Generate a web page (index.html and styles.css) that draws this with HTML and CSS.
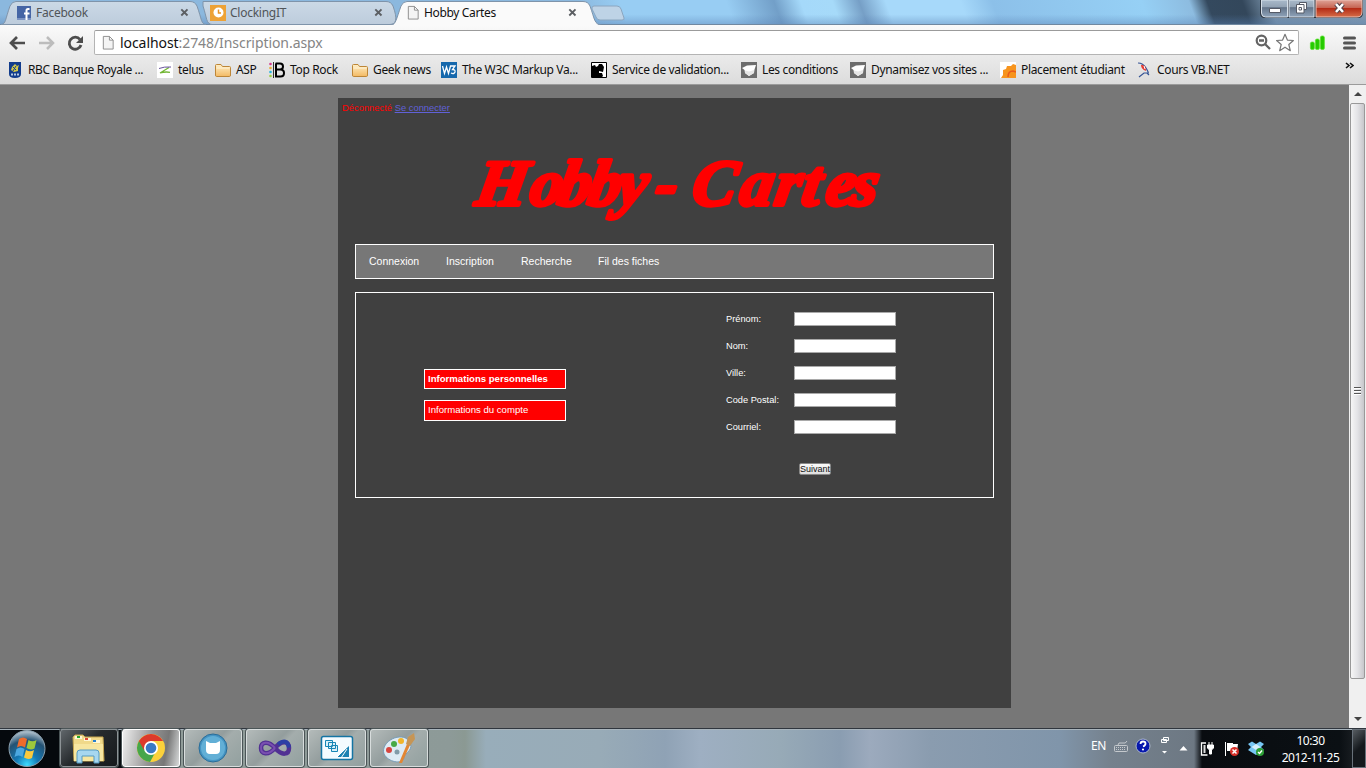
FILE: index.html
```html
<!DOCTYPE html>
<html lang="fr">
<head>
<meta charset="utf-8">
<title>Hobby Cartes</title>
<link rel="stylesheet" href="styles.css">
</head>
<body>
<svg class="defs" width="0" height="0">
  <defs>
    <linearGradient id="tabg" x1="0" y1="0" x2="0" y2="1"><stop offset="0" stop-color="#cbd9e6"/><stop offset="1" stop-color="#bdccdc"/></linearGradient>
    <linearGradient id="fold" x1="0" y1="0" x2="0" y2="1"><stop offset="0" stop-color="#fff0c8"/><stop offset="1" stop-color="#f3b963"/></linearGradient>
    <symbol id="page" viewBox="0 0 12 16"><path d="M1 1.500h6.500l4 4v9.500H1zM7.500 1.500v4h4" fill="#f4f4f4" stroke="#8c8c8c"/></symbol>
    <symbol id="x" viewBox="0 0 9 9"><path d="M1.300 1.300l6.200 6.200M7.500 1.300L1.300 7.500" stroke="#5c5f63" stroke-width="1.900"/></symbol>
    <symbol id="folder" viewBox="0 0 16 14"><path d="M.5 12V2.500Q.5 1.500 1.500 1.500H6l1.500 2h7q1 0 1 1V12q0 1.500-1 1.500h-13q-1 0-1-1.500z" fill="url(#fold)" stroke="#bd8637"/><path d="M1.500 5h13" stroke="#fff3d6"/></symbol>
    <symbol id="grad" viewBox="0 0 16 16"><path d="M0 0h16v16H0z" fill="#6d6d6d"/><path d="M1 6l5-2.500 9-.5-1.500 4.500L13 11l-5 3-4-3-.5-3z" fill="#fff"/><path d="M4 8.500l4 1 5-1.500v3l-5 3-4-3z" fill="#e6e6e6"/></symbol>
  </defs>
</svg>
<div class="window">
  <header class="tabs">
    <div class="tab tab-one">
      <svg class="shape" viewBox="0 0 207 25"><path d="M1 24.500C6 24 5 20 10 6Q12 1.500 16 1.500H190Q195 1.500 197 6C202 20 201 24 206 24.500z" fill="url(#tabg)" stroke="#7f94aa"/></svg>
      <svg class="fav" viewBox="0 0 14 14"><path d="M0 0h14v14H0z" fill="#4565a5"/><path d="M0 12h14v2H0z" fill="#7b93c2"/><path d="M12.500 3h-1.500q-1.500 0-1.500 1.500V14M7 7.500h5.500" fill="none" stroke="#fff" stroke-width="2"/></svg>
      <span class="name">Facebook</span>
      <svg class="close"><use href="#x"/></svg>
    </div>
    <div class="tab tab-two">
      <svg class="shape" viewBox="0 0 200 25"><path d="M1 1.500H184Q189 1.500 191 6C196 20 194 24 188 24.500H10C4 24 5 18 1 6z" fill="url(#tabg)" stroke="#7f94aa"/></svg>
      <svg class="fav" viewBox="0 0 16 16"><rect width="16" height="16" fill="#eda236"/><circle cx="8.500" cy="7.500" r="5" fill="#fff"/><path d="M8.500 4.500V8h2.500" fill="none" stroke="#e89425" stroke-width="1.500"/></svg>
      <span class="name">ClockingIT</span>
      <svg class="close"><use href="#x"/></svg>
    </div>
    <div class="tab tab-three">
      <svg class="shape" viewBox="0 0 212 26"><path d="M0 25.500C5 24 5 20 10 6Q12 1.500 16 1.500H192Q197 1.500 199 6C204 20 203 24 211 25.500" fill="#fafafa" stroke="#7f94aa"/><path d="M0 25h212v1H0z" fill="#fafafa"/></svg>
      <svg class="doc"><use href="#page"/></svg>
      <span class="name">Hobby Cartes</span>
      <svg class="close"><use href="#x"/></svg>
    </div>
    <svg class="newtab" viewBox="0 0 34 18"><path d="M3 1h23q3 0 4 3l3 9q.6 2-2 2H9q-3 0-4-3L1 4q-.6-3 2-3z" fill="#bed3e6" stroke="#8ba6c0"/></svg>
    <div class="controls">
      <svg viewBox="0 0 104 19" width="104" height="19">
        <defs><linearGradient id="wb" x1="0" y1="0" x2="0" y2="1"><stop offset="0" stop-color="#a9bacb"/><stop offset=".4" stop-color="#94a4b5"/><stop offset=".45" stop-color="#64758a"/><stop offset="1" stop-color="#8fa3b9"/></linearGradient>
        <linearGradient id="rb" x1="0" y1="0" x2="0" y2="1"><stop offset="0" stop-color="#dfa396"/><stop offset=".45" stop-color="#c66553"/><stop offset=".5" stop-color="#b52c16"/><stop offset="1" stop-color="#d56d48"/></linearGradient></defs>
        <path d="M0 0v13q0 5 5 5h93q5 0 5-5V0z" fill="#2c3540"/>
        <path d="M1.500 0v13q0 4 4 4h22V0z" fill="url(#wb)" stroke="#d6dfe8"/><path d="M29 0h25v17H29z" fill="url(#wb)" stroke="#d6dfe8"/><path d="M56 0v17h41q5 0 5-5V0z" fill="url(#rb)" stroke="#eec3b9"/>
        <path d="M9.500 8.500h11v4h-11z" fill="#fff" stroke="#555a66"/>
        <path d="M39.500 2.500h7v7h-7z" fill="#fff" stroke="#555a66"/><path d="M36.500 4.500h7.500v8.500h-7.500z" fill="#fff" stroke="#555a66"/><path d="M39 7.500h2.500v2.500h-2.500z" fill="#fff" stroke="#555a66"/>
        <path d="M76 4l7 8M83 4l-7 8" stroke="#564248" stroke-width="4.500"/><path d="M76 4l7 8M83 4l-7 8" stroke="#fff" stroke-width="2.500"/>
      </svg>
    </div>
  </header>
  <div class="toolbar">
    <div class="addressrow">
      <svg class="nav" width="84" height="24" viewBox="0 0 84 24" fill="none"><path d="M18 12H5M10 6l-6 6 6 6" transform="translate(7 0)" stroke="#4d4d4d" stroke-width="2.700"/><path d="M39 12h13M47 6l6 6-6 6" stroke="#bcbcbc" stroke-width="2.500"/><path d="M80 8.500A6 6 0 1 0 81 14" stroke="#4d4d4d" stroke-width="2.800"/><path d="M83 5v7h-7z" fill="#4d4d4d"/></svg>
      <div class="omnibox">
        <svg class="doc"><use href="#page"/></svg>
        <div class="url"><b>localhost</b>:2748/Inscription.aspx</div>
        <svg width="44" height="22" viewBox="0 0 44 22"><circle cx="8.500" cy="8.500" r="4.800" fill="#fff" stroke="#646464" stroke-width="2.200"/><path d="M6 8.500h5M12 12l5 5" stroke="#646464" stroke-width="2.300"/><path d="M32 2.300l2.400 5.800 6 .4-4.600 4 1.500 6.200-5.300-3.500-5.300 3.500 1.500-6.200-4.600-4 6-.4z" fill="#fff" stroke="#777" stroke-width="1.200" stroke-linejoin="round"/></svg>
      </div>
      <svg class="tools" width="52" height="22" viewBox="0 0 52 22"><g fill="#25ca00" stroke="#5be32d" stroke-width=".7"><rect x="3.400" y="10" width="4" height="7.500" rx="1.500"/><rect x="8.400" y="7" width="4" height="10.500" rx="1.500"/><rect x="13.400" y="4" width="4" height="13.500" rx="1.500"/></g><path d="M37.500 6h10M37.500 11h10M37.500 16h10" stroke="#555" stroke-width="3" stroke-linecap="round"/></svg>
    </div>
    <nav class="bookmarks">
      <a class="w1"><svg viewBox="0 0 16 16"><path d="M2 0h12v12q0 4-6 4t-6-4z" fill="#123c8c"/><path d="M4 8l1-3 3-3 2 2 2-1-1 3v3l-4 1z" fill="#d3c84a"/><path d="M6 5l3 3M9 4l-3 5" stroke="#123c8c"/><path d="M4 12.500h8" stroke="#b8cbe3" stroke-width="2" stroke-dasharray="2 1"/></svg><span>RBC Banque Royale ...</span></a>
      <a class="w2"><svg viewBox="0 0 16 16"><path d="M0 0h16v16H0z" fill="#fff"/><path d="M12 5.500L3 11q5-1.500 10-.7" fill="none" stroke="#72b633" stroke-width="1.300"/><path d="M2 6.500q5-2 12-1.500" fill="none" stroke="#66519a"/></svg><span>telus</span></a>
      <a class="w3"><svg viewBox="0 0 16 14"><use href="#folder"/></svg><span>ASP</span></a>
      <a class="w4"><svg viewBox="0 0 16 16"><path d="M6.500 1.500H11q3 0 3 3T11 7.500H7h4.500q3.500 0 3.500 3.500t-3.500 3.500H7v-13" fill="none" stroke="#000" stroke-width="2"/><path d="M4.500 0v16" stroke="#000" stroke-width=".8"/><circle cx="1.500" cy="2" r="1.300" fill="#d5398e"/><circle cx="1.500" cy="6" r="1.300" fill="#e9ac38"/><circle cx="1.500" cy="10" r="1.300" fill="#26b5dd"/><circle cx="1.500" cy="14" r="1.300" fill="#9bcf40"/></svg><span>Top Rock</span></a>
      <a class="w5"><svg viewBox="0 0 16 14"><use href="#folder"/></svg><span>Geek news</span></a>
      <a class="w6"><svg viewBox="0 0 16 16"><path d="M0 0h16v16H0z" fill="#1668ac"/><path d="M1.500 4l2 7.500L5.500 5l2 6.500L9.500 4h4.500l-2.500 3.500q3 0 2.500 2.500-1 2.500-4 1" fill="none" stroke="#fff" stroke-width="1.300"/></svg><span>The W3C Markup Va...</span></a>
      <a class="w7"><svg viewBox="0 0 16 16"><path d="M.5.5h15v15H.5z" fill="#fff" stroke="#000"/><path d="M1 4l3-1 1 2 2-1 1-2 3 0 2 3-1 5-4-1 0 2 3 0 1 3-2 2H1z" fill="#000"/></svg><span>Service de validation...</span></a>
      <a class="w8"><svg viewBox="0 0 16 16"><use href="#grad"/></svg><span>Les conditions</span></a>
      <a class="w9"><svg viewBox="0 0 16 16"><use href="#grad"/></svg><span>Dynamisez vos sites ...</span></a>
      <a class="w10"><svg viewBox="0 0 16 16"><path d="M0 0h16v16H0z" fill="#fff"/><path d="M1 16l2-3 0-5 3-1 1-3 4 0 2-2 3 1v13z" fill="#f7941d"/><path d="M8 15q0-6 5-6l3 1" fill="none" stroke="#ea5b1c" stroke-width="1.500"/></svg><span>Placement étudiant</span></a>
      <a class="w11"><svg viewBox="0 0 16 16"><path d="M2 1q5 0 8 5t2 5l-4 0-5 4M11 11l2 2" fill="none" stroke="#335294" stroke-width="1.200"/><path d="M5 3q5-1 5 6-5-2-5-6z" fill="#e63a31"/><path d="M8 4l1 3" stroke="#fff"/></svg><span>Cours VB.NET</span></a>
      <svg class="more" width="9" height="8" viewBox="0 0 9 8"><path d="M1 1l3 2.500L1 6M5 1l3 2.500L5 6" fill="none" stroke="#111" stroke-width="1.600"/></svg>
    </nav>
  </div>
  <div class="viewport">
    <main class="canvas">
      <div class="sheet">
        <div class="login"><span class="off">Déconnecté</span> <a>Se connecter</a></div>
        <svg class="brand" width="673" height="128" viewBox="338 116 673 128"><text transform="translate(0 205) skewX(-10)" x="474 528 556 586 616 653 690 738 773 800 824 850">Hobby-Cartes</text></svg>
        <nav class="menu"><a class="m1">Connexion</a><a class="m2">Inscription</a><a class="m3">Recherche</a><a class="m4">Fil des fiches</a></nav>
        <section class="wizard">
          <div class="steps"><div class="step current">Informations personnelles</div><div class="step">Informations du compte</div></div>
          <form class="fields">
            <label>Prénom:</label><input type="text">
            <label>Nom:</label><input type="text">
            <label>Ville:</label><input type="text">
            <label>Code Postal:</label><input type="text">
            <label>Courriel:</label><input type="text">
            <button type="button">Suivant</button>
          </form>
        </section>
      </div>
    </main>
    <aside class="scroll">
      <svg width="17" height="18" viewBox="0 0 17 18"><path d="M5 11l4-4 4 4z" fill="#444"/></svg>
      <div class="thumb"><i></i><i></i><i></i></div>
      <svg width="17" height="17" viewBox="0 0 17 17"><path d="M5 6h8l-4 4z" fill="#444"/></svg>
    </aside>
  </div>
  <footer class="taskbar">
    <svg class="orb" width="60" height="38" viewBox="0 0 60 38"><defs><radialGradient id="orb" cx=".5" cy=".95" r=".9"><stop offset="0" stop-color="#3cdcff"/><stop offset=".35" stop-color="#1479b5"/><stop offset=".75" stop-color="#245273"/><stop offset="1" stop-color="#a5b8c6"/></radialGradient></defs><circle cx="27" cy="19.500" r="18" fill="url(#orb)" stroke="#8ba0ae"/><path d="M19 10q4-3 8 0l-2 8.500q-4-3-8 0z" fill="#ee6b2c"/><path d="M28.500 11q4 2.500 8 0l-2 8.500q-4 2-8-.5z" fill="#9cc83c"/><path d="M16.500 20q4-3 8 0l-2 8q-4-3-8 0z" fill="#4ca8e0"/><path d="M26 21q4 2.500 8 0l-2 8q-4 2-8-.5z" fill="#fbca3d"/></svg>
    <div class="task dark"><svg viewBox="0 0 58 38"><path d="M13 8l2-2h8l2 2h18l1 24H14z" fill="#f0d98a" stroke="#c6a650"/><path d="M15 7h7v3h-7zM24 9h7v3h-7zM33 11h7v3h-7z" fill="#fff7d5"/><path d="M17 7h3v2h-3z" fill="#25a52b"/><path d="M25 9h3v2h-3z" fill="#dc4735"/><path d="M33 11h3v2h-3z" fill="#2580cf"/><path d="M14 15h29v17H14z" fill="#f7e6a0"/><path d="M17 34V24q0-3 3-3h16q3 0 3 3v10h-5v-7H22v7z" fill="#a7d7f0" stroke="#559ac2"/></svg></div>
    <div class="task active"><svg viewBox="0 0 58 38"><circle cx="29" cy="19" r="14" fill="#fbd13b"/><path d="M16.900 12A14 14 0 0 0 28 33l6-11-5-3z" fill="#46a64a"/><path d="M29 12h12.100A14 14 0 0 0 16.900 12L22 21z" fill="#dc3a2b"/><circle cx="29" cy="19" r="7" fill="#fff"/><circle cx="29" cy="19" r="5.300" fill="#3979c4"/></svg></div>
    <div class="task"><svg viewBox="0 0 58 38"><circle cx="29" cy="19" r="14" fill="#4594c3" stroke="#2a6d98"/><circle cx="29" cy="19" r="12" fill="#62afd6"/><path d="M22 12l4 2h6l4-2v9q0 4-4 4h-6q-4 0-4-4z" fill="#fff"/></svg></div>
    <div class="task"><svg viewBox="0 0 58 38"><path d="M29 19C22 11 15 13 15 19s7 8 14 0 14-7 14 0-7 8-14 0z" fill="none" stroke="#513193" stroke-width="4.500"/><path d="M29 19C22 11 15 13 15 19s7 8 14 0" fill="none" stroke="#7a4fb0" stroke-width="2"/><path d="M32 15.500q9-7 11 3" fill="none" stroke="#2c3fa5" stroke-width="4"/></svg></div>
    <div class="task"><svg viewBox="0 0 58 38"><rect x="13.500" y="7.500" width="31" height="23" rx="2" fill="#f4fbff" stroke="#1474a3" stroke-width="1.500"/><path d="M17.500 11.500h7v6h-7zM20.500 13.500h7v6h-7zM23.500 16.500h6v6h-6z" fill="#d9eff8" stroke="#1685b5"/><path d="M29 28l12-11v11z" fill="#1c82b2"/><path d="M33 29l6-9M29 28l9-9" stroke="#fff"/></svg></div>
    <div class="task"><svg viewBox="0 0 58 38"><path d="M14 25C10 12 32 2 39 12c6 9-4 11-5 17-2 7-16 4-20-4z" fill="#deebf4" stroke="#789db8"/><circle cx="19" cy="21" r="3" fill="#d8453f"/><circle cx="24" cy="15" r="3" fill="#47a946"/><circle cx="31" cy="12" r="3" fill="#f1b52b"/><circle cx="27" cy="23" r="2.500" fill="#819ba8"/><path d="M29 34l8-19 3 1-8 18z" fill="#e28634"/><path d="M36 15l2-7 6-4 1 6-5 7z" fill="#c69555"/></svg></div>
    <div class="tray">
      <span class="lang">EN</span>
      <svg class="trayicons" width="190" height="38" viewBox="1111 730 190 38"><g fill="none" stroke="#c5c9cd"><rect x="1114.500" y="745.500" width="13" height="6" rx="1"/><path d="M1116 747.500h10M1116 749.500h10" stroke-dasharray="1 1"/><path d="M1118 745q0-3 4-2t5-2"/></g><circle cx="1143" cy="746" r="7" fill="#0718ad" stroke="#abb7c9"/><path d="M1140.500 744q0-2.500 2.500-2.500t2.500 2-2.500 3" fill="none" stroke="#fff" stroke-width="1.800"/><circle cx="1143" cy="749.500" r="1.100" fill="#fff"/><path d="M1163.500 737.500h5v3h-5zM1161.500 739.500h5v3h-5z" fill="#778592" stroke="#fff"/><path d="M1162 751h5l-2.500 2.500zM1179.500 750.500l4-4.500 4 4.500z" fill="#fff"/><path d="M1206 743h-4.500v12h6" fill="none" stroke="#fff" stroke-width="1.300"/><path d="M1203.500 745h2v8h-2z" fill="#ddd"/><path d="M1207.500 745h6v3l-2 2v4h-2v-4l-2-2zM1209 742v3M1212 742v3" fill="#fff" stroke="#fff"/><path d="M1225.500 742v14" stroke="#fff"/><path d="M1227 743h6v1h5l-1 7h-10z" fill="#fff"/><circle cx="1234.500" cy="751.500" r="4.500" fill="#d62f28"/><path d="M1232.500 749.500l4 4M1236.500 749.500l-4 4" stroke="#fff" stroke-width="1.500"/><path d="M1248 744l4-2.500 4 2.500 4-2.500 4 2.500-3 3 3 3-8 5-8-5 3-3z" fill="#77c7f5"/><path d="M1251.500 747l4.500-3 4.500 3-4.500 3z" fill="#d7effc"/><circle cx="1260" cy="752" r="4" fill="#2c9f35"/><path d="M1258 752l1.500 1.500 2.500-3" fill="none" stroke="#fff" stroke-width="1.400"/></svg>
      <div class="clock"><span>10:30</span><span>2012-11-25</span></div>
      <div class="peek"></div>
    </div>
  </footer>
</div>
</body>
</html>
```
FILE: styles.css
```css
* { box-sizing: border-box; }
body { margin: 0; overflow: hidden; font: 12px "Noto Sans", sans-serif; color: #111; }
svg { display: block; flex: none; }
.defs { position: absolute; }
.window { width: 1366px; height: 768px; display: grid; grid-template-rows: 25px 60px 643px 40px; }

.tabs { display: flex; position: relative; background: linear-gradient(180deg, transparent 60%, rgba(90,130,180,.4)), linear-gradient(70deg, #8bb8de 0 550px, #98cdf3 590px, #98cdf3 690px, #729fc8 735px, #a5d9fa 760px, #a6daf9 790px, #769fc6 815px, #a7d9fa 840px, #a7d9fa 910px, #8cc0e9 940px, #96d0f5 1080px, #8dbce0 1125px, #34495e 1142px, #33475b 1175px, #7790a7 1200px, #8299ae); border-bottom: 1px solid #7088a0; }
.tab { position: relative; height: 26px; display: flex; align-items: center; padding-bottom: 1px; }
.tab > * { position: relative; }
.tab .shape { position: absolute; left: 0; top: 0; width: 100%; height: 25px; }
.tab-one { width: 207px; padding-left: 17px; }
.tab-two { width: 200px; margin-left: -5px; padding-left: 8px; }
.tab-three { width: 212px; margin-left: -11px; padding-left: 16px; z-index: 2; }
.tab-three .shape { height: 26px; }
.fav { width: 14px; height: 14px; margin-right: 5px; }
.tab-two .fav { width: 16px; height: 16px; margin-right: 4px; }
.doc { width: 12px; height: 15px; }
.tab .doc { margin-right: 5px; }
.name { flex: 1; color: #505559; letter-spacing: -.25px; line-height: 24px; }
.tab-three .name { color: #111; letter-spacing: -.35px; }
.close { width: 9px; height: 9px; margin-right: 18px; }
.tab-two .close { margin-right: 19px; }
.tab-three .close { margin-right: 26px; }
.newtab { width: 34px; height: 18px; margin: 5px 0 0 -12px; }
.controls { margin-left: auto; margin-right: 6px; }
.controls svg { margin-right: -4px; }

.toolbar { background: linear-gradient(#fafafa, #dcdcdc); border-bottom: 1px solid #9b9b9b; display: flex; flex-direction: column; padding-top: 5px; }
.addressrow { height: 25px; display: flex; align-items: center; }
.nav { margin-right: 10px; }
.omnibox { width: 1205px; height: 25px; border: 1px solid #b4b4b4; border-top-color: #9b9b9b; border-radius: 2px; background: #fff; display: flex; align-items: center; padding: 0 1px 0 7px; }
.url { flex: 1; margin-left: 6px; font: 14px "Noto Sans", sans-serif; color: #858585; letter-spacing: -.07px; line-height: 23px; }
.url b { color: #111; font-weight: 400; }
.tools { margin-left: 8px; }
.bookmarks { height: 29px; display: flex; align-items: center; padding: 1px 0 0 7px; white-space: nowrap; }
.bookmarks a { display: flex; align-items: center; gap: 5px; letter-spacing: -.35px; }
.bookmarks a svg { width: 16px; height: 16px; }
.bookmarks a span { margin-top: -1px; }
.w1 { width: 150px; } .w2 { width: 58px; } .w3 { width: 54px; } .w4 { width: 83px; } .w5 { width: 89px; } .w6 { width: 150px; }
.w7 { width: 150px; } .w8 { width: 109px; } .w9 { width: 150px; } .w10 { width: 136px; } .w11 { width: 208px; }
.more { margin-top: -8px; margin-left: 1px; }

.viewport { display: flex; background: #777; }
.canvas { width: 1349px; padding: 13px 0 0 338px; }
.sheet { width: 673px; height: 610px; background: #404040; font: 9.250px "Liberation Sans", Arial, sans-serif; color: #fff; }
.login { height: 18px; padding: 4px 0 0 4px; font-size: 9.400px; line-height: 12px; }
.login .off { color: #f00; }
.login a { color: #6161d8; text-decoration: underline; }
.brand text { font: italic bold 65px "Brush Script MT", "Liberation Serif", serif; fill: #f00; stroke: #f00; stroke-width: 4px; stroke-linejoin: round; }
.menu { margin: 0 17px; height: 35px; border: 1px solid #fff; background: #777; display: flex; align-items: center; padding: 0 0 1px 13px; font-size: 10.500px; }
.menu .m1 { width: 77px; } .menu .m2 { width: 75px; } .menu .m3 { width: 77px; }
.wizard { margin: 13px 17px 0; height: 206px; border: 1px solid #fff; display: flex; }
.steps { width: 370px; padding: 76px 0 0 68px; display: flex; flex-direction: column; gap: 11px; }
.step { width: 142px; height: 21px; border: 1px solid #fff; background: #f00; padding-left: 3px; line-height: 18px; font-size: 9.600px; }
.step.current { height: 20px; font-weight: 700; }
.fields { display: grid; grid-template-columns: 68px 102px; grid-template-rows: repeat(5, 27px) 1fr; align-content: start; align-items: center; padding-top: 12px; height: 190px; }
.fields input { width: 102px; height: 14px; padding: 0; border: 1px solid #a9a9a9; background: #fff; }
.fields button { grid-column: 2; align-self: start; width: 32px; height: 12px; margin: 23px 0 0 5px; padding: 0; border: 1px solid #888; border-radius: 2px; background: linear-gradient(#fafafa, #dedede); font: 9px/10px "Liberation Sans", Arial, sans-serif; color: #111; display: flex; justify-content: center; }

.scroll { width: 17px; background: #f0f0f0; display: flex; flex-direction: column; justify-content: space-between; align-items: center; }
.thumb { width: 15px; height: 576px; margin-bottom: 32px; border: 1px solid #999; border-radius: 2px; background: linear-gradient(90deg, #f6f6f6, #e3e3e6 50%, #c7c7cb); display: flex; flex-direction: column; justify-content: center; align-items: center; gap: 1px; }
.thumb i { width: 7px; height: 2px; border-top: 1px solid #555; background: #fff; }

.taskbar { display: flex; border-top: 1px solid #30363e; box-shadow: inset 0 1px #a8b4bc; background: linear-gradient(90deg, #05090d 0 119px, #909c99 180px, #8d9a98 450px, #8b9993 465px, #98adba 486px, #98abb7 600px, #8fa2b5 665px, #9eafc2 700px, #97aab7 780px, #8a9db1 840px, #9caabd 870px, #8a9caf 930px, #8095aa 1060px, #75818d 1110px, #6d7883 1194px, #090c10 1202px, #0b1014 1340px, #25292d); }
.task { width: 58px; height: 38px; margin-right: 4px; border: 1px solid #d8dddd; border-radius: 3px; box-shadow: 0 0 0 1px #4b5557; background: linear-gradient(135deg, #b4bbba, #939d9d 45%, #a4adac 55%, #92a09f); }
.task svg { width: 58px; height: 38px; margin: -1px; }
.task.dark { background: linear-gradient(135deg, #60666a, #262a2d 45%, #16191c); border-color: #8d9396; }
.task.active { background: linear-gradient(100deg, #eee, #929292 50%, #777 75%, #d8dada); border-color: #fff; }
.tray { margin-left: auto; display: flex; color: #fff; }
.lang { margin: 9px 5px 0 0; line-height: 16px; letter-spacing: -.4px; }
.trayicons { width: 190px; margin: 1px -27px 0 0; }
.clock { width: 76px; margin-right: 2px; padding: 3px 3px 0 0; display: flex; flex-direction: column; align-items: center; line-height: 17px; letter-spacing: -.5px; }
.peek { width: 14px; height: 39px; border: 1px solid #68717a; background: linear-gradient(135deg, #565c61, #14181c 50%); }
```
